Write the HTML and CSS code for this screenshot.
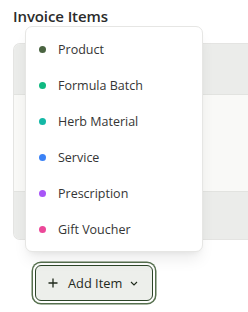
FILE: index.html
```html
<!DOCTYPE html>
<html>
<head>
<meta charset="utf-8">
<link rel="stylesheet" href="styles.css">
</head>
<body>
<div class="page">
  <h2 class="title">Invoice Items</h2>
  <div class="card">
    <div class="card-head"></div>
    <div class="card-body"></div>
    <div class="card-foot"></div>
  </div>
  <div class="actions">
    <div class="dropdown">
      <ul class="menu">
        <li class="menu-item"><span class="dot dot-product"></span>Product</li>
        <li class="menu-item"><span class="dot dot-formula"></span>Formula Batch</li>
        <li class="menu-item"><span class="dot dot-herb"></span>Herb Material</li>
        <li class="menu-item"><span class="dot dot-service"></span>Service</li>
        <li class="menu-item"><span class="dot dot-rx"></span>Prescription</li>
        <li class="menu-item"><span class="dot dot-gift"></span>Gift Voucher</li>
      </ul>
      <button class="add-btn" type="button">
        <svg class="plus" width="10" height="10" viewBox="0 0 10 10"><path d="M5 0.5V9.5M0.5 5H9.5" stroke="#1f2a1c" stroke-width="1.3" fill="none"/></svg>
        <span>Add Item</span>
        <svg class="chev" width="8" height="5" viewBox="0 0 8 5"><path d="M1 1L4 4L7 1" stroke="#1f2a1c" stroke-width="1.1" fill="none"/></svg>
      </button>
    </div>
  </div>
</div>
</body>
</html>
```

FILE: styles.css
```css
* { box-sizing: border-box; }
html, body { margin: 0; padding: 0; background: #fff; overflow: hidden; }
body { width: 248px; height: 312px; font-family: "Open Sans", "Noto Sans", sans-serif; color: #333; }
.page { padding: 5px 0 0 13px; }
.title { margin: 0; font-size: 15px; font-weight: 600; line-height: 22px; color: #2b2b2b; letter-spacing: -0.1px; }
.card {
  margin-top: 16px;
  height: 197px;
  border: 1px solid #e4e4e2;
  border-right: 0;
  border-radius: 7px 0 0 7px;
  overflow: hidden;
  display: flex;
  flex-direction: column;
  background: #f9f9f8;
}
.card-head { height: 51px; background: #ebecea; border-bottom: 1px solid #e2e3e0; }
.card-body { flex: 1; background: #f9f9f7; }
.card-foot { height: 48px; background: #ebecea; border-top: 1px solid #e2e3e0; }
.actions { padding-left: 22px; margin-top: 25px; }
.dropdown { position: relative; display: inline-block; }
.menu {
  position: absolute;
  left: -10px;
  bottom: calc(100% + 13px);
  width: 178px;
  margin: 0;
  padding: 4px 0;
  list-style: none;
  background: #fff;
  border: 1px solid #e6e6e4;
  border-radius: 7px;
  box-shadow: 0 10px 15px -3px rgba(0,0,0,0.08), 0 4px 6px -4px rgba(0,0,0,0.08);
}
.menu-item {
  height: 36px;
  display: flex;
  align-items: center;
  gap: 12px;
  padding-left: 13px;
  font-size: 12.5px;
  color: #353535;
}
.dot { width: 7px; height: 7px; border-radius: 50%; flex: none; }
.dot-product { background: #4a6441; }
.dot-formula { background: #10b981; }
.dot-herb { background: #14b8a6; }
.dot-service { background: #3b82f6; }
.dot-rx { background: #a855f7; }
.dot-gift { background: #ec4899; }
.add-btn {
  display: flex;
  align-items: center;
  height: 36px;
  width: 118px;
  padding: 0 0 0 12px;
  border: 1px solid #2c4528;
  border-radius: 6px;
  background: #edefeb;
  box-shadow: 0 0 0 2px #fff, 0 0 0 3.5px #56704e;
  font-family: "Open Sans", "Noto Sans", sans-serif;
  font-size: 12.8px;
  font-weight: 500;
  color: #1f2a1c;
}
.plus { margin-right: 10px; }
.chev { margin-left: 8px; }
```
